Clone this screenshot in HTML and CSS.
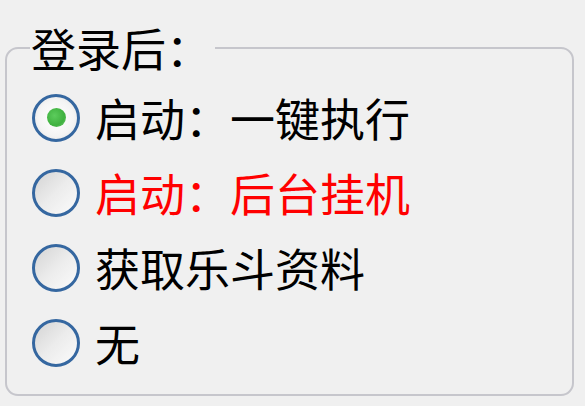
FILE: index.html
```html
<!DOCTYPE html>
<html lang="zh">
<head>
<meta charset="utf-8">
<link rel="stylesheet" href="styles.css">
</head>
<body>
<fieldset class="group">
  <legend class="group-title">登录后：</legend>
  <label class="option">
    <span class="radio checked"><span class="dot"></span></span>
    <span class="label">启动：一键执行</span>
  </label>
  <label class="option">
    <span class="radio"></span>
    <span class="label red">启动：后台挂机</span>
  </label>
  <label class="option">
    <span class="radio"></span>
    <span class="label">获取乐斗资料</span>
  </label>
  <label class="option">
    <span class="radio"></span>
    <span class="label">无</span>
  </label>
</fieldset>
</body>
</html>
```
FILE: styles.css
```css
html, body {
  margin: 0;
  padding: 0;
  background: #f0f0f0;
  width: 585px;
  height: 406px;
  overflow: hidden;
}
body {
  font-family: "Noto Sans CJK SC", "Noto Sans", sans-serif;
  color: #000;
}
.group {
  box-sizing: border-box;
  width: 569px;
  margin: 24px 0 0 5px;
  padding: 8px 0 14px 23px;
  border: 2px solid #c6c6cc;
  border-radius: 13px;
  min-width: 0;
}
.group-title {
  font-size: 45px;
  line-height: 48px;
  height: 48px;
  padding: 0 4px 0 1px;
  margin: 0;
}
.option {
  display: flex;
  align-items: center;
  height: 75px;
  gap: 15px;
}
.radio {
  box-sizing: border-box;
  width: 48px;
  height: 48px;
  margin-left: 2px;
  border-radius: 50%;
  border: 3px solid #3567a0;
  background: linear-gradient(135deg, #d4d4d4 0%, #ececec 50%, #fbfbfb 100%);
  display: flex;
  align-items: center;
  justify-content: center;
  flex: none;
}
.radio.checked {
  background: radial-gradient(circle, #ffffff 0%, #f4f4f4 60%, #dcdcdc 100%);
}
.dot {
  width: 19px;
  height: 19px;
  border-radius: 50%;
  background: radial-gradient(circle at 40% 40%, #5ccc5c 0%, #3fb13f 60%, #7ccf7c 100%);
}
.label {
  font-size: 45px;
  line-height: 48px;
  white-space: nowrap;
}
.red {
  color: #ff0000;
}
```
